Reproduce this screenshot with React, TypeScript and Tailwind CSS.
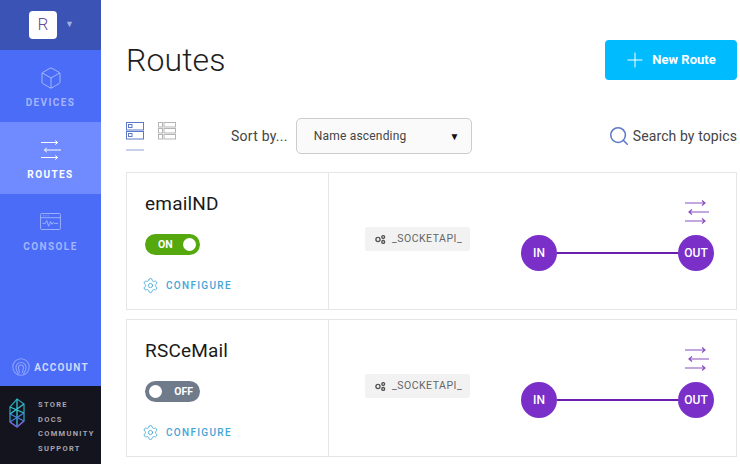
import { Search, Plus, Settings, Box } from 'lucide-react';

function RouteArrows({ className }: { className: string }) {
  return (
    <svg viewBox="0 0 26 24" fill="none" stroke="currentColor" strokeWidth="1.2" className={className}>
      <path d="M1 3h20M18 0.5 21 3l-3 2.5" />
      <path d="M25 12H5M8 9.5 5 12l3 2.5" />
      <path d="M1 21h20M18 18.5l3 2.5-3 2.5" />
    </svg>
  );
}

function ConsoleIcon() {
  return (
    <svg viewBox="0 0 22 18" fill="none" stroke="currentColor" strokeWidth="1" className="h-[17px] w-[21px]">
      <rect x="0.5" y="0.5" width="21" height="17" rx="1" />
      <path d="M0.5 5h21" />
      <path d="M3 3h1M5.5 3h1M8 3h1" />
      <path d="M2.5 11h3l1.5-3 2 6 2-5 1.5 3 1.5-2 1 1h4" />
    </svg>
  );
}

function CardViewIcon({ className }: { className: string }) {
  return (
    <svg viewBox="0 0 18 18" fill="none" stroke="currentColor" strokeWidth="1" className={className}>
      <rect x="0.5" y="0.5" width="17" height="7.5" />
      <rect x="0.5" y="9.5" width="17" height="7.5" />
      <rect x="2.5" y="2.5" width="3.5" height="3" />
      <rect x="2.5" y="11.5" width="3.5" height="3" />
    </svg>
  );
}

function ListViewIcon({ className }: { className: string }) {
  return (
    <svg viewBox="0 0 18 18" fill="none" stroke="currentColor" strokeWidth="1" className={className}>
      <rect x="0.5" y="0.5" width="4" height="4.5" />
      <rect x="6" y="0.5" width="11.5" height="4.5" />
      <rect x="0.5" y="6.5" width="4" height="4.5" />
      <rect x="6" y="6.5" width="11.5" height="4.5" />
      <rect x="0.5" y="12.5" width="4" height="4.5" />
      <rect x="6" y="12.5" width="11.5" height="4.5" />
    </svg>
  );
}

function AccountIcon() {
  return (
    <svg viewBox="0 0 18 18" fill="none" stroke="currentColor" strokeWidth="1.1" className="h-[18px] w-[18px] text-[#8ea2ff]">
      <circle cx="9" cy="9" r="8.2" />
      <path d="M6.5 16.5c0-2-2.5-3-2.5-7a5 5 0 0 1 10 0c0 4-2.5 5-2.5 7M7.5 15c.5-1-1-3-1-5.5a2.5 2.5 0 0 1 5 0c0 2.5-1.5 4.5-1 5.5" />
    </svg>
  );
}

function Logo() {
  return (
    <svg viewBox="0 0 18 30" fill="none" strokeWidth="1.3" className="h-[30px] w-[18px]">
      <path d="M9 1 16 6v17l-7 6-7-5V9z" stroke="#2a9fb0" />
      <path d="M2 9l14 6M16 6 2 16M9 1v28" stroke="#35c4d0" />
      <path d="M2 16l14 7M16 15 2 24" stroke="#4a7fe0" />
      <path d="M2 24l7 5 7-6" stroke="#8a55e0" />
    </svg>
  );
}

function SocketIcon() {
  return (
    <svg viewBox="0 0 12 10" fill="none" stroke="#555" strokeWidth="1.5" className="h-[9px] w-[11px]">
      <circle cx="3.2" cy="5" r="2.3" />
      <circle cx="9" cy="2.3" r="1.6" />
      <circle cx="9" cy="7.7" r="1.6" />
    </svg>
  );
}

function NavItem({ label, icon, active }: { label: string; icon: React.ReactNode; active?: boolean }) {
  return (
    <div
      className={
        active
          ? 'flex h-[72px] flex-col items-center justify-center gap-[5px] bg-[#6f8bff] pt-[2px] text-white'
          : 'flex h-[72px] flex-col items-center justify-center gap-[5px] pt-[2px] text-[#a3b5ff]'
      }
    >
      <div className="flex h-[26px] items-center justify-center">{icon}</div>
      <div className="text-[10px] font-bold leading-[14px] tracking-[1.4px]">{label}</div>
    </div>
  );
}

function RouteCard({ name, on }: { name: string; on: boolean }) {
  return (
    <div className="flex h-[138px] border border-[#e6e6e6] bg-white">
      <div className="flex w-[202px] shrink-0 flex-col border-r border-[#e6e6e6] pl-[18px] pt-[18px]">
        <div className="text-[19px] leading-[26px] tracking-[0.2px] text-[#1a1a1a]">{name}</div>
        {on ? (
          <div className="mt-[17px] flex h-[21px] w-[55px] items-center justify-between rounded-full bg-[#55a80e] pl-[13px] pr-[4px]">
            <span className="text-[10.5px] font-bold text-white">ON</span>
            <span className="h-[13px] w-[13px] rounded-full bg-white" />
          </div>
        ) : (
          <div className="mt-[17px] flex h-[21px] w-[55px] items-center justify-between rounded-full bg-[#6f7a8a] pl-[4px] pr-[7px]">
            <span className="h-[13px] w-[13px] rounded-full bg-white" />
            <span className="text-[10.5px] font-bold text-white">OFF</span>
          </div>
        )}
        <div className="mt-[22px] -ml-[3px] flex items-center gap-[7px] text-[#45a5d8]">
          <Settings className="h-[17px] w-[17px]" strokeWidth={1.2} />
          <span className="text-[10px] font-medium tracking-[1.3px]">CONFIGURE</span>
        </div>
      </div>
      <div className="flex flex-1 items-start pl-[36px] pr-[22px]">
        <div className="mt-[54px] flex h-[24px] w-[105px] items-center gap-[6px] rounded-[2px] bg-[#f2f2f2] pl-[10px] text-[10.5px] text-[#666]">
          <SocketIcon />
          <span className="tracking-[0.5px]">_SOCKETAPI_</span>
        </div>
        <div className="ml-[51px] flex flex-1 flex-col items-end pt-[27px]">
          <RouteArrows className="mr-[4px] h-[24px] w-[26px] text-[#8a4fc0]" />
          <div className="mt-[11px] flex w-full items-center">
            <div className="flex h-[36px] w-[36px] items-center justify-center rounded-full bg-[#7a2fc8] text-[12px] font-medium text-white">IN</div>
            <div className="h-[2px] flex-1 bg-[#6a1fb0]" />
            <div className="flex h-[36px] w-[36px] items-center justify-center rounded-full bg-[#7a2fc8] text-[12px] font-medium text-white">OUT</div>
          </div>
        </div>
      </div>
    </div>
  );
}

export default function App() {
  return (
    <div className="flex h-[464px] w-[740px] overflow-hidden bg-white font-['Roboto',sans-serif]">
      <div className="flex w-[101px] shrink-0 flex-col bg-[#4a6cf7]">
        <div className="flex h-[50px] items-center bg-[#3b53b5] pl-[29px]">
          <div className="flex h-[28px] w-[28px] items-center justify-center rounded-[4px] bg-white text-[17px] font-light text-[#6a4a9a]">R</div>
          <span className="ml-[8px] text-[9px] text-[#9db0e0]">▼</span>
        </div>
        <NavItem label="DEVICES" icon={<Box className="h-[24px] w-[24px]" strokeWidth={1} />} />
        <NavItem label="ROUTES" active icon={<RouteArrows className="h-[20px] w-[22px]" />} />
        <NavItem label="CONSOLE" icon={<ConsoleIcon />} />
        <div className="mt-auto flex h-[30px] items-center justify-center gap-[4px] pb-[8px] text-[10px] font-bold tracking-[1.2px] text-[#cfd8ff]">
          <AccountIcon />
          <span>ACCOUNT</span>
        </div>
        <div className="flex h-[78px] items-start bg-[#14141f] pl-[8px] pt-[12px]">
          <Logo />
          <div className="ml-[12px] mt-[2px] flex flex-col gap-[4px] text-[7.5px] font-bold leading-[10.5px] tracking-[1.3px] text-[#a5a5ad]">
            <span>STORE</span>
            <span>DOCS</span>
            <span>COMMUNITY</span>
            <span>SUPPORT</span>
          </div>
        </div>
      </div>

      <div className="flex flex-1 flex-col pl-[25px] pr-[3px]">
        <div className="mt-[40px] flex h-[40px] items-center justify-between">
          <h1 className="text-[32px] font-light tracking-[0.1px] text-[#1f1f1f]">Routes</h1>
          <div className="flex h-[40px] w-[132px] items-center justify-center gap-[5px] rounded-[4px] bg-[#00bcff] pr-[3px] text-[13px] font-bold text-white">
            <Plus className="h-[24px] w-[24px]" strokeWidth={1} />
            <span>New Route</span>
          </div>
        </div>
        <div className="mt-[38px] flex h-[36px] items-center">
          <div className="flex w-[105px] gap-[14px] self-start pt-[4px]">
            <div className="border-b-2 border-[#c8d0ee] pb-[9px]">
              <CardViewIcon className="h-[18px] w-[18px] text-[#5d78c8]" />
            </div>
            <ListViewIcon className="h-[18px] w-[18px] text-[#b5b5b5]" />
          </div>
          <span className="text-[14px] tracking-[0.25px] text-[#444]">Sort by...</span>
          <div className="ml-[8px] flex h-[36px] w-[176px] items-center justify-between rounded-[5px] border border-[#ccc] bg-[#fafafa] pl-[17px] pr-[11px] text-[12px] tracking-[0.2px] text-[#444]">
            <span>Name ascending</span>
            <span className="text-[10px] text-[#111]">▼</span>
          </div>
          <div className="ml-auto flex items-center gap-[3px] text-[14px] tracking-[0.1px] text-[#444]">
            <Search className="h-[22px] w-[22px] text-[#5d78c8]" strokeWidth={1.7} />
            <span>Search by topics</span>
          </div>
        </div>
        <div className="mt-[18px] flex flex-col gap-[9px]">
          <RouteCard name="emailND" on />
          <RouteCard name="RSCeMail" on={false} />
        </div>
      </div>
    </div>
  );
}
